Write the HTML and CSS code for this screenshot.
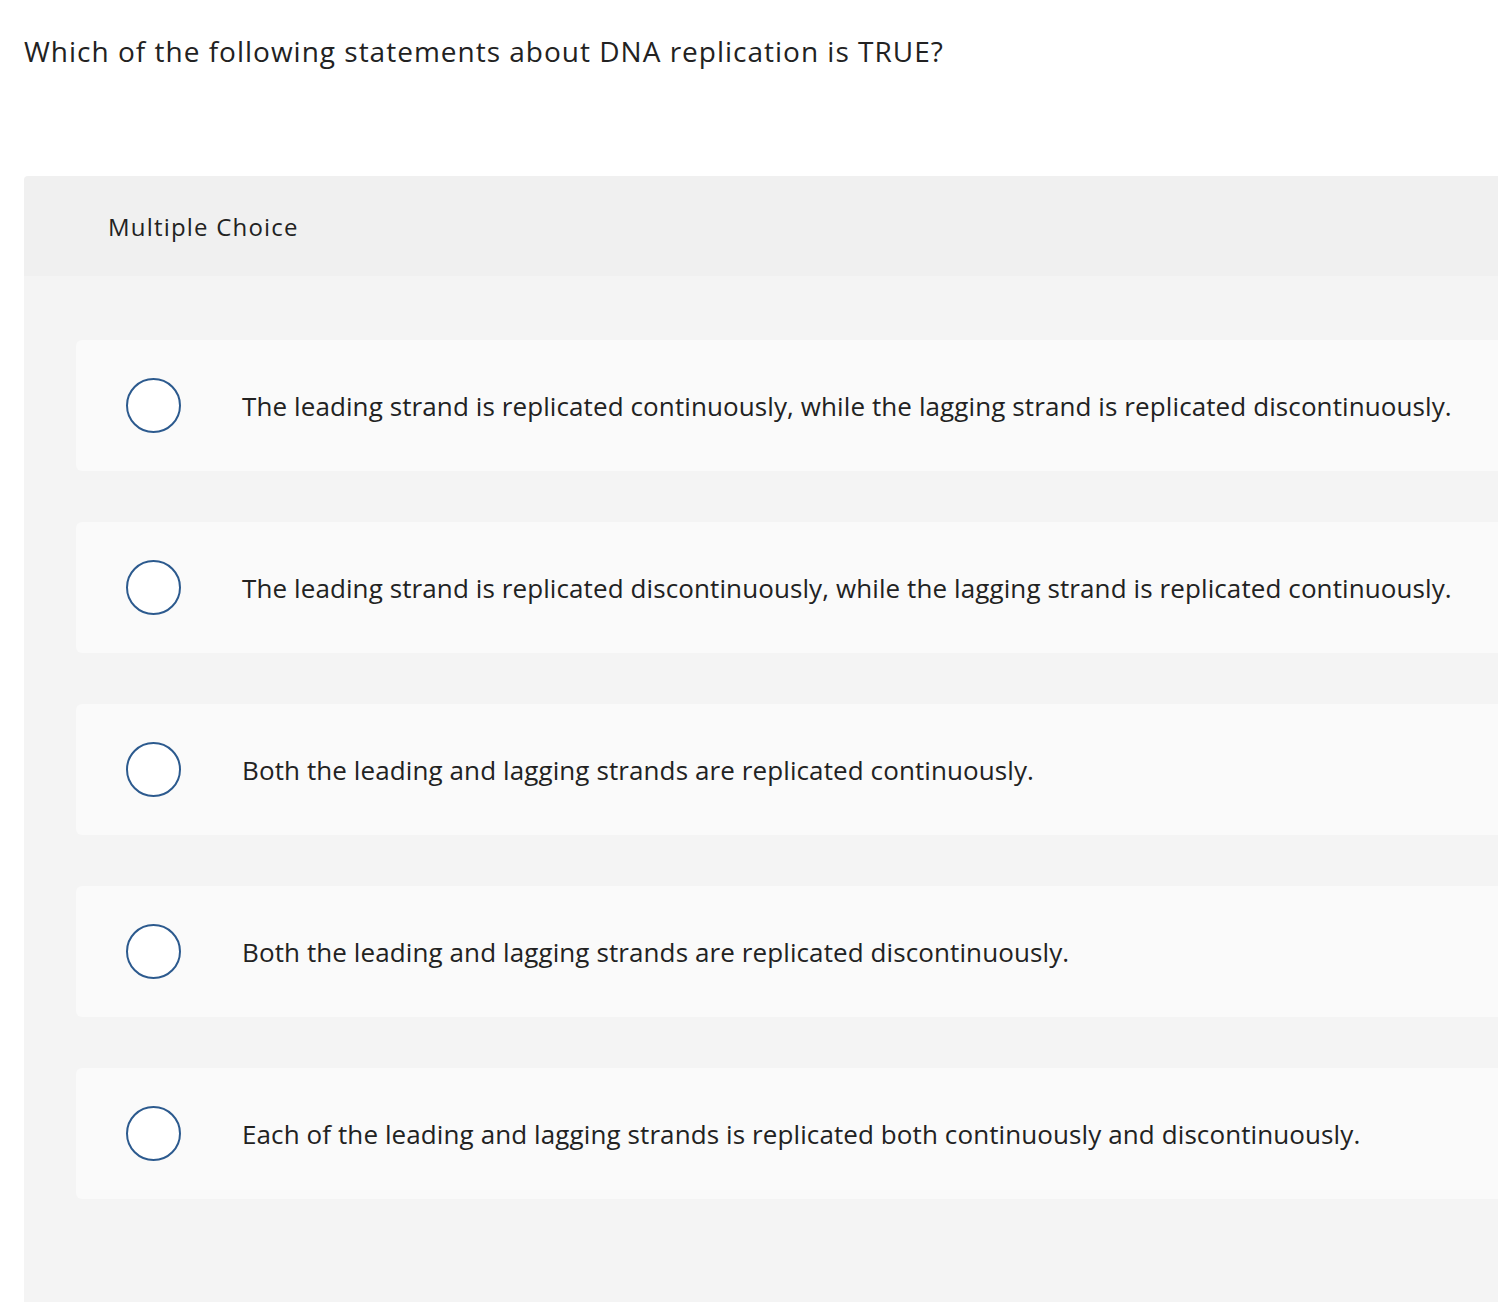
FILE: index.html
```html
<!DOCTYPE html>
<html lang="en">
<head>
<meta charset="utf-8">
<title>Multiple Choice</title>
<link rel="stylesheet" href="styles.css">
</head>
<body>
<main class="page">
  <h1 class="question">Which of the following statements about DNA replication is TRUE?</h1>
  <section class="panel">
    <header class="panel-header">Multiple Choice</header>
    <div class="panel-body">
      <label class="option"><span class="radio"></span><span class="option-text">The leading strand is replicated continuously, while the lagging strand is replicated discontinuously.</span></label>
      <label class="option"><span class="radio"></span><span class="option-text">The leading strand is replicated discontinuously, while the lagging strand is replicated continuously.</span></label>
      <label class="option"><span class="radio"></span><span class="option-text">Both the leading and lagging strands are replicated continuously.</span></label>
      <label class="option"><span class="radio"></span><span class="option-text">Both the leading and lagging strands are replicated discontinuously.</span></label>
      <label class="option"><span class="radio"></span><span class="option-text">Each of the leading and lagging strands is replicated both continuously and discontinuously.</span></label>
    </div>
  </section>
</main>
</body>
</html>
```
FILE: styles.css
```css
html, body {
  margin: 0;
  padding: 0;
  background: #ffffff;
  overflow: hidden;
}
body {
  font-family: "Open Sans", "Liberation Sans", sans-serif;
  color: #222222;
}
.page {
  padding-left: 24px;
}
.question {
  margin: 0;
  padding-top: 31px;
  height: 176px;
  box-sizing: border-box;
  font-size: 28px;
  font-weight: 400;
  line-height: 40px;
  letter-spacing: 1px;
  color: #222;
  white-space: nowrap;
}
.panel {
  border-radius: 4px 0 0 0;
  overflow: hidden;
}
.panel-header {
  background: #f0f0f0;
  height: 100px;
  padding-left: 84px;
  display: flex;
  align-items: center;
  font-size: 24px;
  letter-spacing: 1.2px;
  color: #222;
}
.panel-body {
  background: #f4f4f4;
  padding: 64px 0 103px 52px;
  display: flex;
  flex-direction: column;
  gap: 51px;
}
.option {
  background: #fafafa;
  border-radius: 6px 0 0 6px;
  height: 131px;
  display: flex;
  align-items: center;
  padding-left: 50px;
}
.radio {
  width: 51px;
  height: 51px;
  border: 2px solid #2c5a8e;
  border-radius: 50%;
  background: #fff;
  flex: none;
}
.option-text {
  margin-left: 61px;
  font-size: 26px;
  letter-spacing: 0.1px;
  color: #222;
  white-space: nowrap;
}
```
